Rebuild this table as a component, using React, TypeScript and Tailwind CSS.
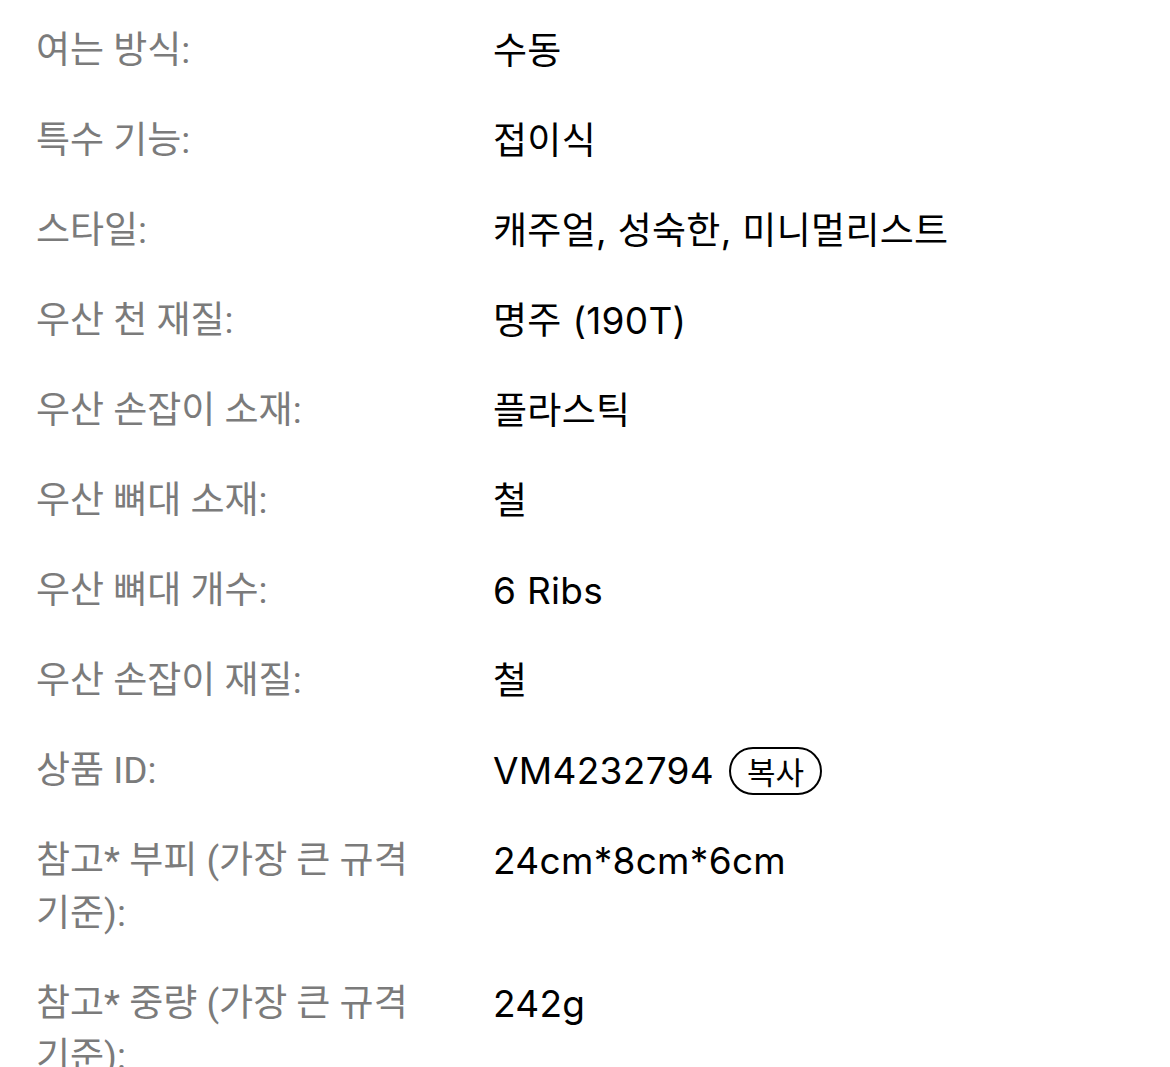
import React from 'react';

const rows: { label: string; value: string; copy?: boolean }[] = [
    { label: '여는 방식:', value: '수동' },
    { label: '특수 기능:', value: '접이식' },
    { label: '스타일:', value: '캐주얼, 성숙한, 미니멀리스트' },
    { label: '우산 천 재질:', value: '명주 (190T)' },
    { label: '우산 손잡이 소재:', value: '플라스틱' },
    { label: '우산 뼈대 소재:', value: '철' },
    { label: '우산 뼈대 개수:', value: '6 Ribs' },
    { label: '우산 손잡이 재질:', value: '철' },
    { label: '상품 ID:', value: 'VM4232794', copy: true },
    { label: '참고* 부피 (가장 큰 규격 기준):', value: '24cm*8cm*6cm' },
    { label: '참고* 중량 (가장 큰 규격 기준):', value: '242g' },
];

const App: React.FC = () => {
    return (
        <div className="w-[1170px] h-[1067px] overflow-hidden bg-white pt-[24px] pl-[36px] pr-6">
            <div className="flex flex-col gap-[37px]">
                {rows.map(row => (
                    <div key={row.label} className="grid grid-cols-[430px_1fr] gap-[27px] text-[37px] leading-[53px]">
                        <div className="text-[#7b7b7b] break-keep font-['Roboto','Noto_Sans_CJK_KR',sans-serif]">{row.label}</div>
                        <div className="self-start flex items-center h-[53px] text-black font-['Inter','Noto_Sans_CJK_KR',sans-serif]">
                            <span className="tracking-[0.3px]">{row.value}</span>
                            {row.copy && (
                                <span className="ml-[15px] h-[48px] px-[16px] flex items-center rounded-full border-2 border-black text-[31px] leading-none font-['Noto_Sans_CJK_KR',sans-serif]">
                                    복사
                                </span>
                            )}
                        </div>
                    </div>
                ))}
            </div>
        </div>
    );
};

export default App;
